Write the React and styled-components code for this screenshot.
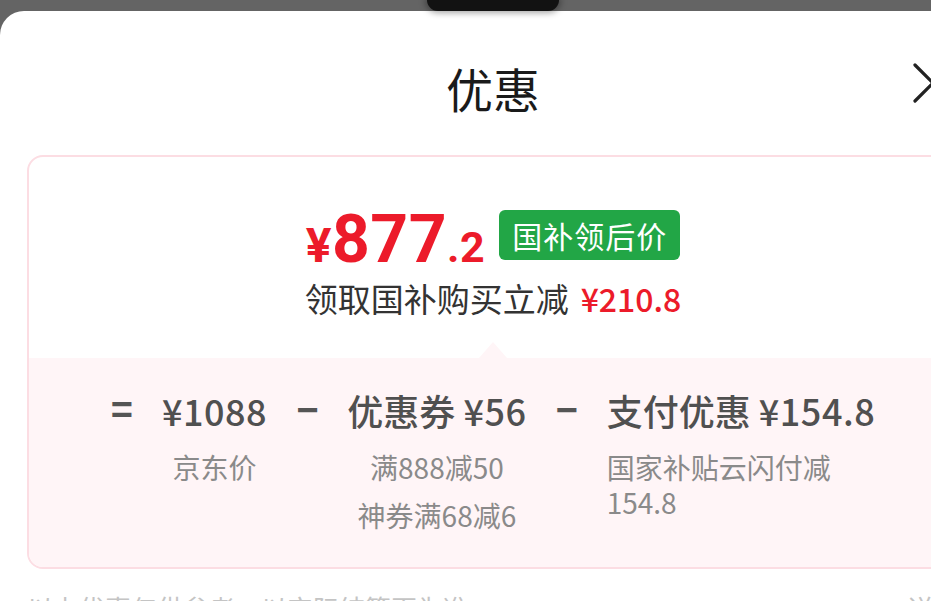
import React from "react";
import styled, { createGlobalStyle } from "styled-components";

const Global = createGlobalStyle`
  html, body {
    margin: 0;
    padding: 0;
    overflow: hidden;
    background: #646464;
  }
  body {
    font-family: "Noto Sans CJK SC", "Noto Sans", sans-serif;
  }
`;

const Page = styled.div`
  width: 986px;
`;

const TopStrip = styled.div`
  height: 11px;
  display: flex;
  justify-content: center;
`;

const Notch = styled.div`
  width: 132px;
  height: 11px;
  background: #121212;
  border-radius: 0 0 12px 12px;
  box-shadow: 0 0 6px 2px rgba(0, 0, 0, 0.35);
`;

const Sheet = styled.div`
  background: #ffffff;
  border-radius: 24px 24px 0 0;
  min-height: 600px;
  display: flex;
  flex-direction: column;
`;

const Header = styled.div`
  display: grid;
  grid-template-columns: 1fr auto 1fr;
  align-items: start;
`;

const Title = styled.h1`
  grid-column: 2;
  margin: 54px 0 0;
  font-size: 47px;
  line-height: 46px;
  font-weight: 400;
  color: #1a1a1a;
`;

const Close = styled.button`
  grid-column: 3;
  justify-self: end;
  margin: 52px 33px 0 0;
  padding: 0;
  border: none;
  background: none;
  width: 40px;
  height: 40px;
  display: flex;
`;

const Card = styled.div`
  margin: 44px 27px 0;
  border: 2px solid #fcdde3;
  border-radius: 16px;
  background: #ffffff;
`;

const Summary = styled.div`
  padding: 53px 0 39px;
  display: flex;
  flex-direction: column;
  align-items: center;
`;

const PriceRow = styled.div`
  display: flex;
  align-items: flex-start;
`;

const Price = styled.div`
  font-family: Roboto, "Liberation Sans", sans-serif;
  font-weight: 700;
  font-size: 66px;
  line-height: 60px;
  color: #ec1b2a;
  letter-spacing: 0.5px;
`;

const PriceSmall = styled.span`
  font-size: ${(p) => p.$size}px;
  line-height: 1;
`;

const Badge = styled.div`
  margin-left: 14px;
  height: 50px;
  padding: 0 13px;
  border-radius: 6px;
  background: #22a646;
  color: #ffffff;
  font-size: 30px;
  line-height: 50px;
  letter-spacing: 1px;
`;

const SaveLine = styled.div`
  margin-top: 7px;
  font-size: 33px;
  line-height: 42px;
  color: #333333;
  display: flex;
  align-items: center;
`;

const SaveAmt = styled.span`
  margin-left: 12px;
  color: #ec1b2a;
  font-weight: 500;
  font-size: 32px;
`;

const Breakdown = styled.div`
  position: relative;
  background: #fff5f7;
  border-radius: 0 0 14px 14px;
  padding: 30px 0 34px;

  &::before {
    content: "";
    position: absolute;
    left: 50%;
    top: -16px;
    transform: translateX(-50%);
    border-left: 14px solid transparent;
    border-right: 14px solid transparent;
    border-bottom: 16px solid #fff5f7;
  }
`;

const Formula = styled.div`
  display: flex;
  justify-content: center;
  align-items: flex-start;
  gap: 29px;
`;

const Op = styled.div`
  font-family: "Liberation Sans", Arial, sans-serif;
  font-size: 38px;
  line-height: 44px;
  font-weight: 700;
  color: #555555;
`;

const Col = styled.div`
  display: flex;
  flex-direction: column;
  align-items: ${(p) => (p.$left ? "flex-start" : "center")};
  text-align: ${(p) => (p.$left ? "left" : "center")};
`;

const ColTitle = styled.div`
  font-size: 36px;
  line-height: 44px;
  font-weight: 500;
  color: #505050;
  white-space: nowrap;
`;

const Num = styled.span`
  letter-spacing: 0.5px;
`;

const Subs = styled.div`
  margin-top: 18px;
  width: 0;
  min-width: 100%;
  display: flex;
  flex-direction: column;
  align-items: inherit;
  gap: 13px;
`;

const Sub = styled.div`
  font-size: 28px;
  line-height: 35px;
  color: #8a8a8a;
`;

const Footer = styled.div`
  margin: 22px 27px 0;
  display: flex;
  justify-content: space-between;
  font-size: 26px;
  line-height: 34px;
  color: #c4c4c4;
`;

export default function App() {
  return (
    <Page>
      <Global />
      <TopStrip>
        <Notch />
      </TopStrip>
      <Sheet>
        <Header>
          <Title>优惠</Title>
          <Close aria-label="关闭">
            <svg width="40" height="40" viewBox="0 0 40 40">
              <path
                d="M2 2 L38 38 M38 2 L2 38"
                stroke="#222"
                strokeWidth="3.2"
                strokeLinecap="round"
                fill="none"
              />
            </svg>
          </Close>
        </Header>
        <Card>
          <Summary>
            <PriceRow>
              <Price>
                <PriceSmall $size={48}>¥</PriceSmall>877
                <PriceSmall $size={43}>.2</PriceSmall>
              </Price>
              <Badge>国补领后价</Badge>
            </PriceRow>
            <SaveLine>
              领取国补购买立减<SaveAmt>¥210.8</SaveAmt>
            </SaveLine>
          </Summary>
          <Breakdown>
            <Formula>
              <Op>=</Op>
              <Col>
                <ColTitle>
                  <Num>¥1088</Num>
                </ColTitle>
                <Subs>
                  <Sub>京东价</Sub>
                </Subs>
              </Col>
              <Op>−</Op>
              <Col>
                <ColTitle>
                  优惠券 <Num>¥56</Num>
                </ColTitle>
                <Subs>
                  <Sub>满888减50</Sub>
                  <Sub>神券满68减6</Sub>
                </Subs>
              </Col>
              <Op>−</Op>
              <Col $left>
                <ColTitle>
                  支付优惠 <Num>¥154.8</Num>
                </ColTitle>
                <Subs>
                  <Sub>国家补贴云闪付减154.8</Sub>
                </Subs>
              </Col>
            </Formula>
          </Breakdown>
        </Card>
        <Footer>
          <span>以上优惠仅供参考，以实际结算页为准</span>
          <span>详情</span>
        </Footer>
      </Sheet>
    </Page>
  );
}
